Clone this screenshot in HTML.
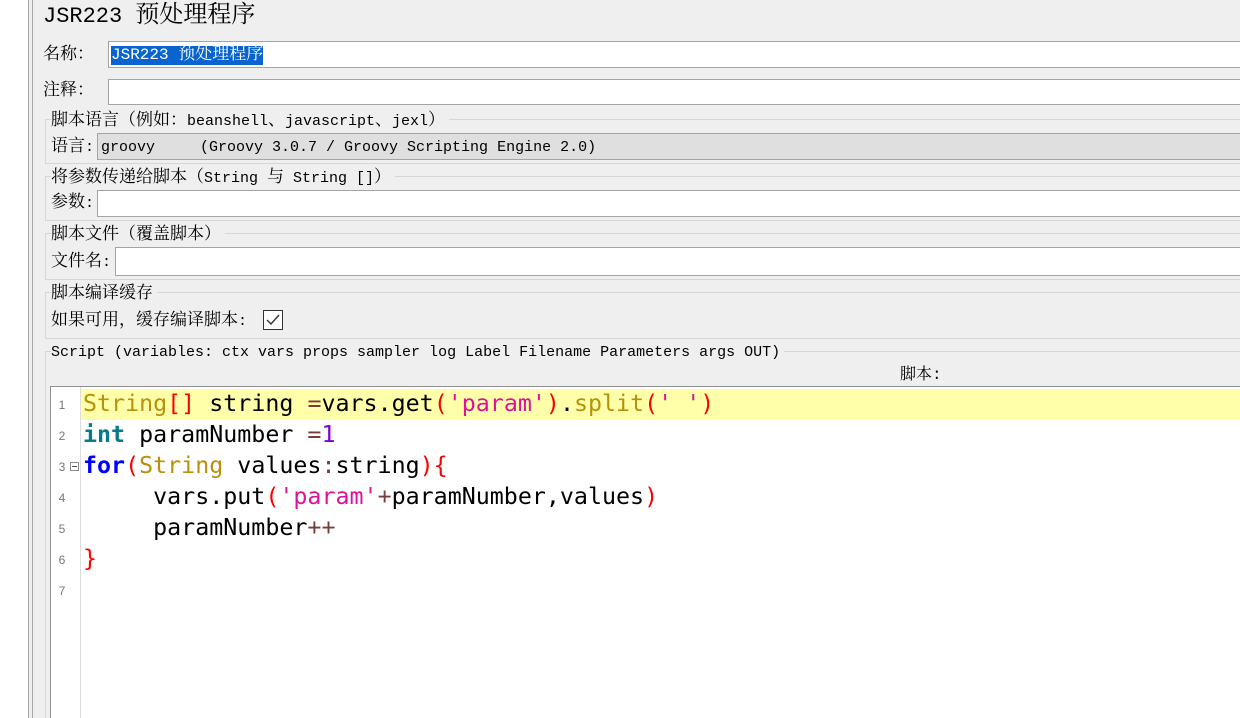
<!DOCTYPE html>
<html><head><meta charset="utf-8"><style>
*{margin:0;padding:0;box-sizing:border-box}
html,body{width:1240px;height:718px;overflow:hidden}
body{background:#fff;position:relative;font-family:"Liberation Mono","Noto Serif CJK SC","Noto Sans CJK SC",monospace;color:#000}
.a{position:absolute;white-space:pre}
.panel{position:absolute;left:28px;top:0;width:1212px;height:718px;background:#efefef;border-left:1px solid #a8a8a8}
.inner{position:absolute;left:32px;top:0;width:1px;height:718px;background:#a8a8a8}
.in{position:absolute;background:#fff;border:1px solid #a4a4a4;border-right:none}
.grp{position:absolute;left:45px;width:1200px;border:1px solid #d6d6d6;border-right:none}
.lbl{font-size:15px;line-height:18px}
.c{font-size:17px;line-height:18px}
.code{font-family:"DejaVu Sans Mono","Liberation Mono",monospace;font-size:23.3px;line-height:31px}
.n{position:absolute;left:50px;width:24px;text-align:center;font-family:"Liberation Sans",sans-serif;font-size:12px;color:#777}
</style></head><body>
<div class="panel"></div>
<div class="inner"></div>
<div class="a" style="left:43px;top:3px;font-size:22px;line-height:28px;font-family:'Liberation Mono','Noto Serif CJK SC',monospace">JSR223 <span style="font-size:24px;line-height:28px">预处理程序</span></div>

<div class="a lbl" style="left:43px;top:47px"><span class="c">名称：</span></div>
<div class="in" style="left:108px;top:41px;width:1140px;height:27px"></div>
<div class="a lbl" style="left:111px;top:46px;background:#0a64d0;color:#fff;font-size:16px">JSR223 <span class="c">预处理程序</span></div>

<div class="a lbl" style="left:43px;top:83px"><span class="c">注释：</span></div>
<div class="in" style="left:108px;top:79px;width:1140px;height:26px"></div>

<div class="grp" style="top:119px;height:45px"></div>
<div class="a lbl" style="left:51px;top:113px;background:#efefef;padding-right:4px"><span class="c">脚本语言（例如：</span>beanshell<span class="c">、</span>javascript<span class="c">、</span>jexl<span class="c">）</span></div>
<div class="a lbl" style="left:51px;top:139px"><span class="c">语言</span>:</div>
<div class="in" style="left:97px;top:133px;width:1150px;height:27px;background:#dfdfdf"></div>
<div class="a lbl" style="left:101px;top:139px">groovy     (Groovy 3.0.7 / Groovy Scripting Engine 2.0)</div>

<div class="grp" style="top:176px;height:45px"></div>
<div class="a lbl" style="left:51px;top:170px;background:#efefef;padding-right:4px"><span class="c">将参数传递给脚本（</span>String <span class="c">与</span> String []<span class="c">）</span></div>
<div class="a lbl" style="left:51px;top:195px"><span class="c">参数</span>:</div>
<div class="in" style="left:97px;top:190px;width:1150px;height:27px"></div>

<div class="grp" style="top:233px;height:47px"></div>
<div class="a lbl" style="left:51px;top:227px;background:#efefef;padding-right:4px"><span class="c">脚本文件（覆盖脚本）</span></div>
<div class="a lbl" style="left:51px;top:254px"><span class="c">文件名</span>:</div>
<div class="in" style="left:115px;top:247px;width:1130px;height:29px"></div>

<div class="grp" style="top:292px;height:47px"></div>
<div class="a lbl" style="left:51px;top:286px;background:#efefef;padding-right:4px"><span class="c">脚本编译缓存</span></div>
<div class="a lbl" style="left:51px;top:313px"><span class="c">如果可用，缓存编译脚本</span>:</div>
<div style="position:absolute;left:263px;top:310px;width:20px;height:20px;border:1px solid #333;background:#fff">
<svg width="18" height="18" viewBox="0 0 18 18"><path d="M3 9 L7 13 L15 4" fill="none" stroke="#333" stroke-width="1.4"/></svg></div>

<div class="grp" style="top:351px;height:380px"></div>
<div class="a lbl" style="left:51px;top:344px;background:#efefef;padding-right:4px">Script (variables: ctx vars props sampler log Label Filename Parameters args OUT)</div>
<div class="a" style="left:900px;top:367px;font-size:16px;line-height:17px">脚本:</div>

<div class="in" style="left:50px;top:386px;width:1200px;height:340px;border-color:#909090"></div>
<div style="position:absolute;left:80px;top:387px;width:1px;height:331px;background:#ddd"></div>
<div style="position:absolute;left:81px;top:389px;width:1159px;height:31px;background:#ffffaa"></div>

<div class="n" style="top:398px">1</div>
<div class="n" style="top:429px">2</div>
<div class="n" style="top:460px">3</div>
<div style="position:absolute;left:70px;top:462px;width:9px;height:9px;border:1px solid #888;background:#fff"><div style="position:absolute;left:1px;top:3px;width:5px;height:1px;background:#555"></div></div>
<div class="n" style="top:491px">4</div>
<div class="n" style="top:522px">5</div>
<div class="n" style="top:553px">6</div>
<div class="n" style="top:584px">7</div>

<div class="a code" style="left:83px;top:388px"><span style="color:#b8900a">String</span><span style="color:#f00">[]</span> string <span style="color:#7a3b3b">=</span>vars.get<span style="color:#f00">(</span><span style="color:#e0109a">'param'</span><span style="color:#f00">)</span>.<span style="color:#b8900a">split</span><span style="color:#f00">(</span><span style="color:#e0109a">' '</span><span style="color:#f00">)</span>
<b style="color:#0a7a8a">int</b> paramNumber <span style="color:#7a3b3b">=</span><span style="color:#8000d0">1</span>
<b style="color:#0000ff">for</b><span style="color:#f00">(</span><span style="color:#b8900a">String</span> values<span style="color:#7a3b3b">:</span>string<span style="color:#f00">){</span>
     vars.put<span style="color:#f00">(</span><span style="color:#e0109a">'param'</span><span style="color:#7a3b3b">+</span>paramNumber,values<span style="color:#f00">)</span>
     paramNumber<span style="color:#7a3b3b">++</span>
<span style="color:#f00">}</span></div>
</body></html>
